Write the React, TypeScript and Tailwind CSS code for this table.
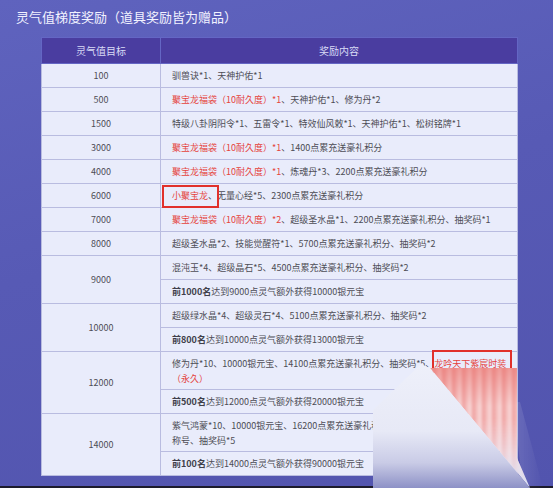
import type { ReactNode } from "react";

const font = { fontFamily: '"Noto Sans CJK SC", "Noto Sans", sans-serif' };

const Red = ({ children }: { children: ReactNode }) => (
  <span className="text-[#e5433b]">{children}</span>
);

const Strong = ({ children }: { children: ReactNode }) => (
  <span className="font-bold text-[#3f3f4a]">{children}</span>
);

// left column: target value
const Target = ({ value, span = 1 }: { value: string; span?: number }) => (
  <td
    rowSpan={span}
    className="border border-[#b9bce0] text-center align-middle text-[9px] text-[#4d4d55]"
  >
    {value}
  </td>
);

// right column: reward text
const Reward = ({
  children,
  two = false,
  extra,
}: {
  children: ReactNode;
  two?: boolean;
  extra?: ReactNode;
}) => (
  <td
    className={`relative border border-[#b9bce0] pl-[11px] pr-[6px] text-left align-middle text-[9px] leading-[15px] text-[#4d4d55] ${
      two ? "py-[3.5px]" : "py-[4px]"
    }`}
  >
    {children}
    {extra}
  </td>
);

const Mark = ({ className }: { className: string }) => (
  <div className={`absolute border-2 border-[#e1302b] ${className}`} />
);

export default function App() {
  return (
    <div
      className="relative flex h-[488px] w-[553px] flex-col overflow-hidden bg-[linear-gradient(165deg,#5f63be_0%,#575ab5_45%,#5254ae_100%)]"
      style={font}
    >
      <h1 className="pl-[16px] pt-[8px] text-[13px] leading-[18px] font-normal text-[#f2f2ff]">
        灵气值梯度奖励（道具奖励皆为赠品）
      </h1>

      <table className="mt-[11px] ml-[41px] w-[476px] table-fixed border-collapse bg-[#e9ecfb]">
        <colgroup>
          <col className="w-[119px]" />
          <col className="w-[357px]" />
        </colgroup>
        <thead>
          <tr className="h-[26px] bg-[#4a3da0] text-[10px] font-normal text-[#d9dcf6]">
            <th className="border border-[#6466c4] font-normal">灵气值目标</th>
            <th className="border border-[#6466c4] font-normal">奖励内容</th>
          </tr>
        </thead>
        <tbody>
          <tr>
            <Target value="100" />
            <Reward>驯兽诀*1、天神护佑*1</Reward>
          </tr>
          <tr>
            <Target value="500" />
            <Reward>
              <Red>聚宝龙福袋（10耐久度）*1</Red>、天神护佑*1、修为丹*2
            </Reward>
          </tr>
          <tr>
            <Target value="1500" />
            <Reward>特级八卦阴阳令*1、五雷令*1、特效仙风敕*1、天神护佑*1、松树铭牌*1</Reward>
          </tr>
          <tr>
            <Target value="3000" />
            <Reward>
              <Red>聚宝龙福袋（10耐久度）*1</Red>、1400点累充送豪礼积分
            </Reward>
          </tr>
          <tr>
            <Target value="4000" />
            <Reward>
              <Red>聚宝龙福袋（10耐久度）*1</Red>、炼魂丹*3、2200点累充送豪礼积分
            </Reward>
          </tr>
          <tr>
            <Target value="6000" />
            <Reward extra={<Mark className="left-[1px] top-[1px] h-[23px] w-[57px]" />}>
              <Red>小聚宝龙</Red>、无量心经*5、2300点累充送豪礼积分
            </Reward>
          </tr>
          <tr>
            <Target value="7000" />
            <Reward>
              <Red>聚宝龙福袋（10耐久度）*2</Red>、超级圣水晶*1、2200点累充送豪礼积分、抽奖码*1
            </Reward>
          </tr>
          <tr>
            <Target value="8000" />
            <Reward>超级圣水晶*2、技能觉醒符*1、5700点累充送豪礼积分、抽奖码*2</Reward>
          </tr>
          <tr>
            <Target value="9000" span={2} />
            <Reward>混沌玉*4、超级晶石*5、4500点累充送豪礼积分、抽奖码*2</Reward>
          </tr>
          <tr>
            <Reward>
              <Strong>前1000名</Strong>达到9000点灵气额外获得10000银元宝
            </Reward>
          </tr>
          <tr>
            <Target value="10000" span={2} />
            <Reward>超级绿水晶*4、超级灵石*4、5100点累充送豪礼积分、抽奖码*2</Reward>
          </tr>
          <tr>
            <Reward>
              <Strong>前800名</Strong>达到10000点灵气额外获得13000银元宝
            </Reward>
          </tr>
          <tr>
            <Target value="12000" span={2} />
            <Reward two extra={<Mark className="left-[271px] top-[-2px] h-[23px] w-[80px]" />}>
              修为丹*10、10000银元宝、14100点累充送豪礼积分、抽奖码*5、<Red>龙吟天下紫宸时装</Red>
              <br />
              <Red>（永久）</Red>
            </Reward>
          </tr>
          <tr>
            <Reward>
              <Strong>前500名</Strong>达到12000点灵气额外获得20000银元宝
            </Reward>
          </tr>
          <tr>
            <Target value="14000" span={2} />
            <Reward two>
              紫气鸿蒙*10、10000银元宝、16200点累充送豪礼积分、龙吟天下
              <br />
              称号、抽奖码*5
            </Reward>
          </tr>
          <tr>
            <Reward>
              <Strong>前100名</Strong>达到14000点灵气额外获得90000银元宝
            </Reward>
          </tr>
        </tbody>
      </table>

      <div className="flex-1" />
      <div className="h-[2px] bg-[#1c1b2c]" />

      {/* page-curl watermark over the lower right corner */}
      <div className="pointer-events-none absolute left-[373px] top-[362px] h-[126px] w-[180px]">
        <div className="absolute inset-0 bg-[linear-gradient(90deg,rgba(240,240,252,0.85),rgba(255,255,255,0)_95%)] [clip-path:polygon(140px_40px,147px_40px,170px_126px,150px_126px)] blur-[3px]" />
        <div className="absolute inset-0 bg-[linear-gradient(180deg,#f4e4ec_0%,#eceaf6_70%,#d9dbef_100%)] [clip-path:polygon(57px_6px,144px_6px,144px_96px,157px_126px)]" />
        <div className="absolute inset-0 bg-[linear-gradient(180deg,rgba(230,95,90,0.55)_0%,rgba(230,95,90,0)_35%),repeating-linear-gradient(90deg,#ee9f9e_0px,#f5c0bf_4px,#f8d8d8_7px,#f1adac_10px)] [clip-path:polygon(57px_6px,144px_6px,144px_96px,157px_126px)] [mask-image:linear-gradient(180deg,#000_0%,#000_45%,transparent_95%)] blur-[1px]" />
        <div className="absolute inset-0 bg-[linear-gradient(180deg,#eef0fa_0%,#e7e9f6_55%,#c9cbe6_80%,#8d91c6_100%)] [clip-path:polygon(0px_48px,48px_2px,57px_6px,157px_126px,0px_126px)]" />
      </div>
    </div>
  );
}
